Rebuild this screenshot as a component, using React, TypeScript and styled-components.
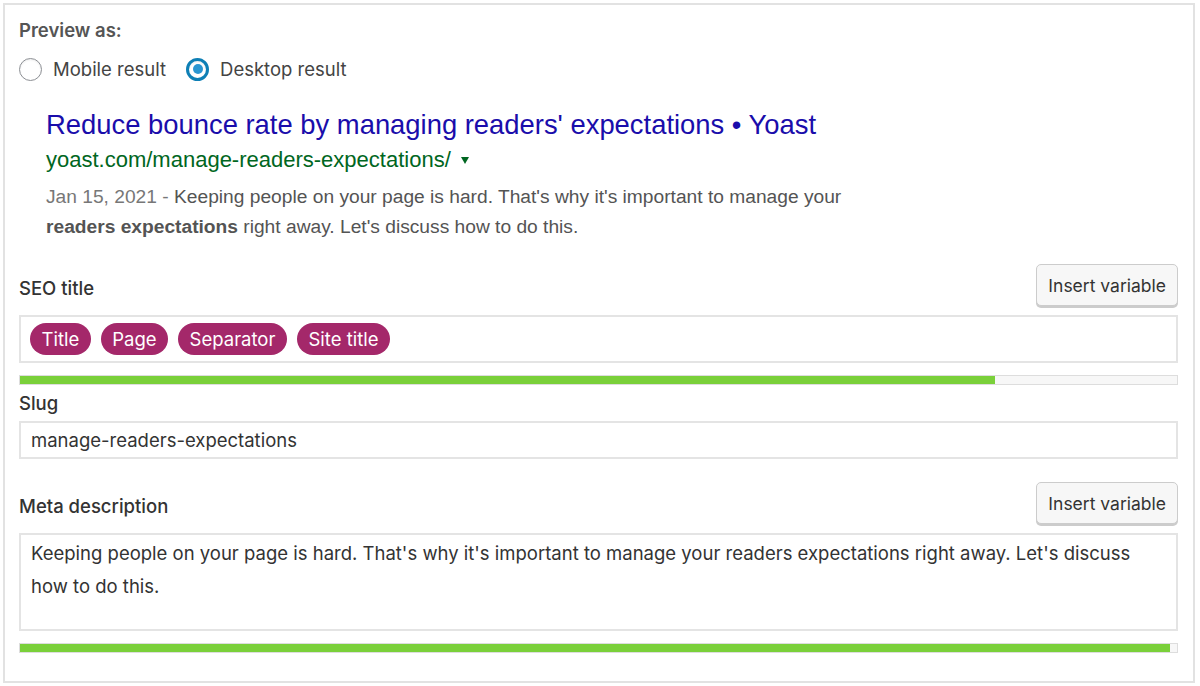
import React from "react"
import styled, { createGlobalStyle } from "styled-components"

const GlobalStyle = createGlobalStyle`
    html, body {
        margin: 0;
        padding: 0;
        background: #fff;
    }
    body {
        font-family: Inter, "Noto Sans", sans-serif;
        color: #333;
    }
`

const tags = ["Title", "Page", "Separator", "Site title"]

export default function App() {
    return (
        <>
            <GlobalStyle />
            <Panel>
                <Heading>Preview as:</Heading>
                <RadioRow>
                    <RadioLabel>
                        <Radio checked={false} />
                        Mobile result
                    </RadioLabel>
                    <RadioLabel>
                        <Radio checked={true} />
                        Desktop result
                    </RadioLabel>
                </RadioRow>

                <Snippet>
                    <SnippetTitle>Reduce bounce rate by managing readers' expectations • Yoast</SnippetTitle>
                    <SnippetUrl>
                        yoast.com/manage-readers-expectations/
                        <Caret />
                    </SnippetUrl>
                    <SnippetDescription>
                        <DateText>Jan 15, 2021 - </DateText>
                        Keeping people on your page is hard. That's why it's important to manage your{" "}
                        <b>readers expectations</b> right away. Let's discuss how to do this.
                    </SnippetDescription>
                </Snippet>

                <FieldHeader>
                    <Label>SEO title</Label>
                    <InsertButton>Insert variable</InsertButton>
                </FieldHeader>
                <TagInput>
                    {tags.map((tag, index) => (
                        <Tag key={index}>{tag}</Tag>
                    ))}
                </TagInput>
                <Progress>
                    <ProgressFill style={{ width: "84.3%" }} />
                </Progress>

                <SlugLabel>Slug</SlugLabel>
                <TextField>manage-readers-expectations</TextField>

                <FieldHeader $top={23}>
                    <Label>Meta description</Label>
                    <InsertButton>Insert variable</InsertButton>
                </FieldHeader>
                <TextArea>
                    Keeping people on your page is hard. That's why it's important to manage your readers expectations right away. Let's discuss how to do this.
                </TextArea>
                <Progress>
                    <ProgressFill style={{ width: "99.4%" }} />
                </Progress>
            </Panel>
        </>
    )
}

const Panel = styled.div`
    margin: 3px 5px 3px 3px;
    height: 680px;
    box-sizing: border-box;
    border: 2px solid #e2e2e2;
    padding: 13px 15px 0 14px;
`
const Heading = styled.div`
    font-size: 18.5px;
    font-weight: 600;
    color: #555;
    line-height: 24px;
`
const RadioRow = styled.div`
    display: flex;
    align-items: center;
    gap: 20px;
    margin-top: 15px;
`
const RadioLabel = styled.label`
    display: flex;
    align-items: center;
    gap: 11px;
    font-size: 18.5px;
    color: #444;
    line-height: 24px;
`
const Radio = styled.span<{ checked: boolean }>`
    width: 23px;
    height: 23px;
    box-sizing: border-box;
    border-radius: 50%;
    border: ${p => (p.checked ? "3px solid #0e7fb5" : "1px solid #8c8f94")};
    box-shadow: inset 0 1px 2px rgba(0, 0, 0, 0.08);
    display: flex;
    align-items: center;
    justify-content: center;
    &::after {
        content: "";
        display: ${p => (p.checked ? "block" : "none")};
        width: 10px;
        height: 10px;
        border-radius: 50%;
        background: #2a96d1;
    }
`
const Snippet = styled.div`
    padding: 27px 0 0 27px;
    width: 830px;
    font-family: Arial, "Liberation Sans", sans-serif;
`
const SnippetTitle = styled.div`
    font-size: 27.4px;
    line-height: 34px;
    color: #1a0dab;
`
const SnippetUrl = styled.div`
    font-size: 22px;
    line-height: 26px;
    margin-top: 5px;
    color: #006621;
    display: flex;
    align-items: center;
`
const Caret = styled.span`
    width: 0;
    height: 0;
    margin-left: 10px;
    border-left: 4.5px solid transparent;
    border-right: 4.5px solid transparent;
    border-top: 7px solid #006621;
`
const SnippetDescription = styled.div`
    margin-top: 9px;
    font-size: 19.2px;
    line-height: 30px;
    color: #545454;
    b {
        font-weight: bold;
    }
`
const DateText = styled.span`
    color: #777;
`
const FieldHeader = styled.div<{ $top?: number }>`
    display: flex;
    align-items: center;
    justify-content: space-between;
    margin-top: ${p => p.$top ?? 22}px;
    margin-bottom: 9px;
`
const Label = styled.div`
    font-size: 18.5px;
    font-weight: 500;
    color: #333;
    padding-top: 6px;
`
const InsertButton = styled.button`
    font-family: Inter, "Noto Sans", sans-serif;
    font-size: 17.5px;
    color: #333;
    height: 42px;
    padding: 0 11px;
    background: #f7f7f7;
    border: 1px solid #ccc;
    border-radius: 5px;
    box-shadow: 0 2px 0 #ccc;
`
const TagInput = styled.div`
    height: 48px;
    box-sizing: border-box;
    border: 2px solid #e4e4e4;
    display: flex;
    align-items: center;
    gap: 10px;
    padding: 0 9px;
`
const Tag = styled.span`
    background: #a4286a;
    color: #fff;
    font-size: 18.5px;
    line-height: 32px;
    padding: 0 11.5px;
    border-radius: 16px;
`
const Progress = styled.div`
    margin-top: 12px;
    height: 10px;
    box-sizing: border-box;
    border: 1px solid #ddd;
    background: #f7f7f7;
    overflow: hidden;
`
const ProgressFill = styled.div`
    height: 100%;
    background: #7ad03a;
`
const SlugLabel = styled(Label)`
    margin-top: 6px;
    padding-top: 0;
    line-height: 24px;
`
const TextField = styled.div`
    margin-top: 6px;
    height: 38px;
    box-sizing: border-box;
    border: 2px solid #e4e4e4;
    font-size: 18.5px;
    color: #333;
    padding: 0 10px;
    display: flex;
    align-items: center;
`
const TextArea = styled.div`
    height: 98px;
    box-sizing: border-box;
    border: 2px solid #e4e4e4;
    font-size: 18.5px;
    line-height: 33px;
    color: #333;
    padding: 2px 10px;
`
